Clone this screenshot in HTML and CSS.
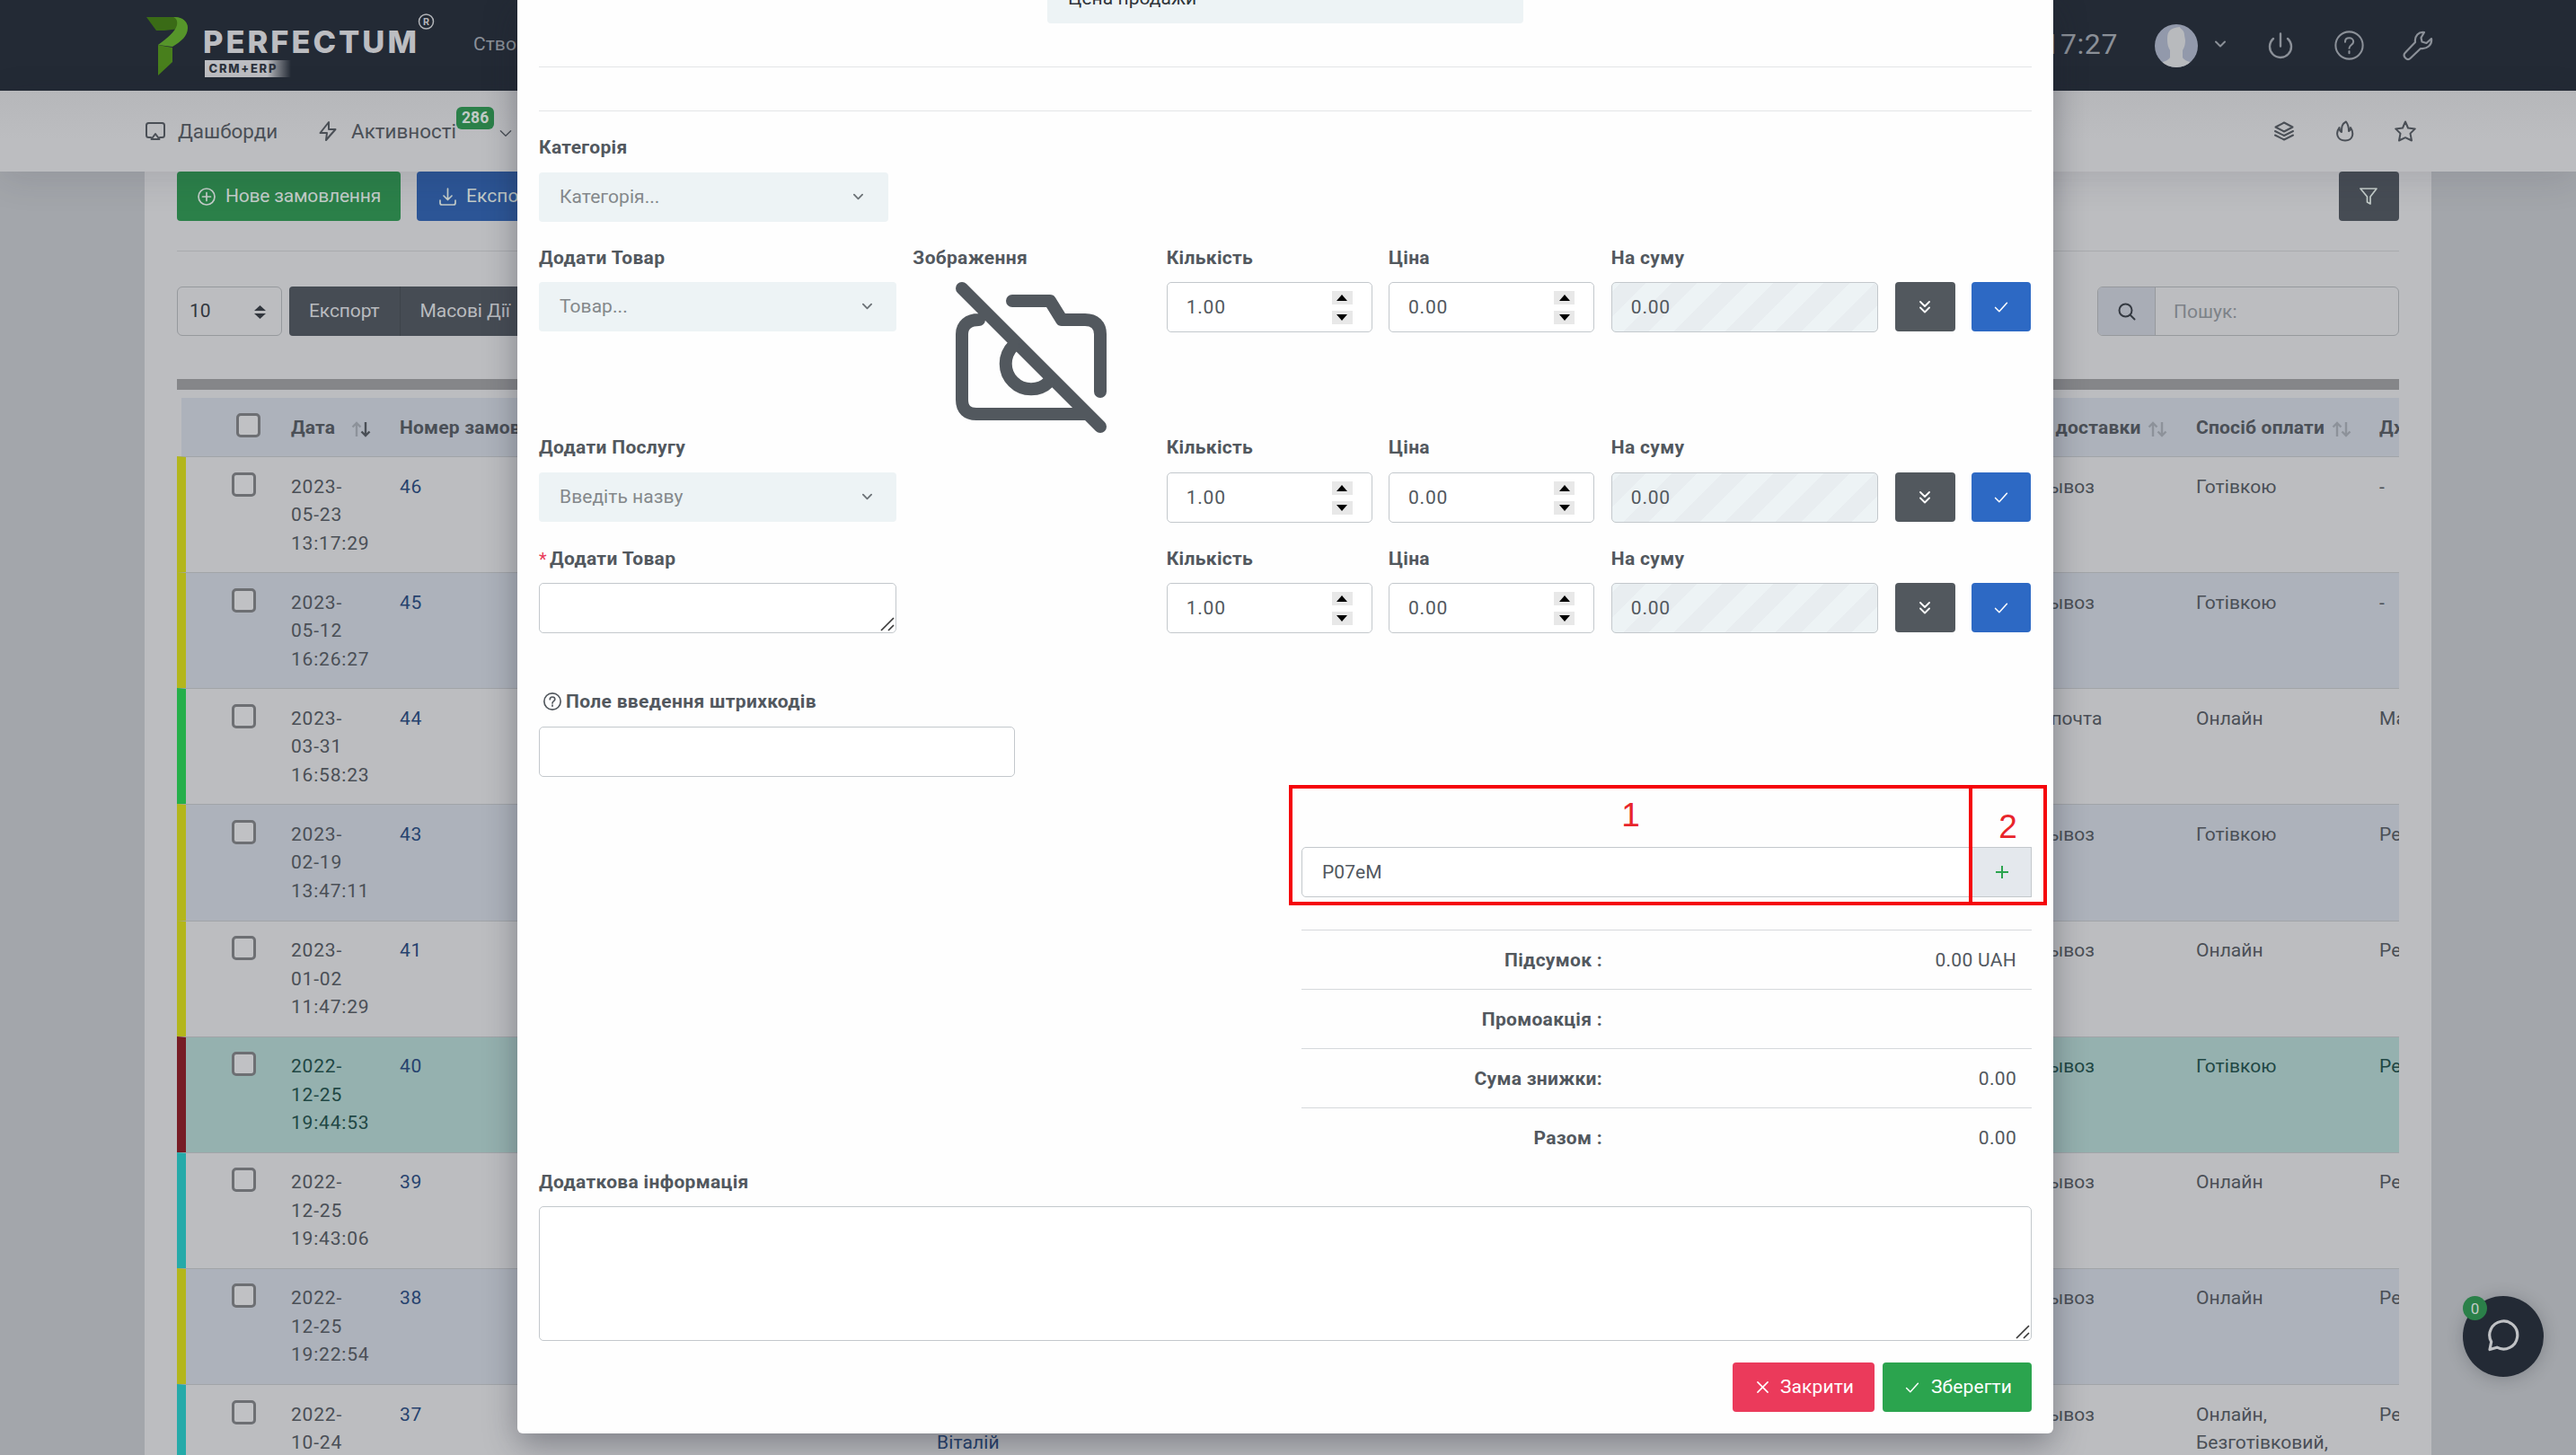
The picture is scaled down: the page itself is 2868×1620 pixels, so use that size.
FILE: index.html
```html
<!DOCTYPE html>
<html lang="uk">
<head>
<meta charset="utf-8">
<title>Perfectum CRM+ERP</title>
<link rel="stylesheet" href="styles.css">
</head>
<body>
<svg class="sprite" aria-hidden="true">
  <symbol id="i-down" viewBox="0 0 12 8"><path d="M1 1.500 6 6.500 11 1.500"/></symbol>
  <symbol id="i-check" viewBox="0 0 18 14"><path d="M1.500 7.500 6.500 12.500 16.500 1.500"/></symbol>
  <symbol id="i-double" viewBox="0 0 12 14"><path d="M1 1 6 6 11 1M1 7.500 6 12.500 11 7.500"/></symbol>
  <symbol id="i-sort" viewBox="0 0 22 18"><path class="up" d="M6 17V2M1.500 6.500 6 2 10.500 6.500"/><path class="dn" d="M16 1V16M11.500 11.500 16 16 20.500 11.500"/></symbol>
  <symbol id="i-help" viewBox="0 0 24 24"><circle cx="12" cy="12" r="11"/><path d="M8.700 9.200C8.700 7.200 10.100 6 12 6s3.400 1.300 3.400 3.100c0 2.500-3.400 2.600-3.400 5.200M12 16.800v1.600"/></symbol>
  <symbol id="i-grip" viewBox="0 0 16 16"><path d="M1 15 15 1M9 15 15 9"/></symbol>
</svg>

<div class="page">
  <header class="topbar">
    <svg class="logo" width="330" height="90" viewBox="0 0 330 90">
      <defs>
        <linearGradient id="fade"><stop offset="0" stop-color="#bcbdc1"/><stop offset=".72" stop-color="#bcbdc1"/><stop offset="1" stop-color="#bcbdc1" stop-opacity="0"/></linearGradient>
      </defs>
      <path fill="#3a6b16" d="M0 19h32c8 0 14 5 14 12L20 34H11z"/>
      <path fill="#56952a" d="M32 19c8 0 14 5 14 12 0 9-7 15-17 21L13 50c10-7 19-15 21-22 1-5-1-8-4-9z"/>
      <path fill="#487f1c" d="M13 50l16 3v16L13 84z"/>
      <text class="logo-name" x="63" y="59" textLength="238">PERFECTUM</text>
      <rect x="65" y="67" width="96" height="19" fill="url(#fade)"/>
      <text class="logo-tag" x="69.500" y="80.500" textLength="75">CRM+ERP</text>
      <circle cx="311.500" cy="24" r="8" fill="none" stroke="#b4b6ba" stroke-width="1.500"/>
      <text class="logo-reg" x="311.500" y="28" text-anchor="middle">R</text>
    </svg>
    <span class="create">Створити</span>
    <div class="tools">
      <span class="clock">17:27</span>
      <svg class="avatar" width="48" height="48" viewBox="0 0 48 48"><clipPath id="round"><circle cx="24" cy="24" r="24"/></clipPath><g clip-path="url(#round)"><path fill="#9299ab" d="M0 0h48v48H0z"/><path fill="#b8babd" d="M14 16C14 7 18 4 28 3c0 2 5 3 5 9l1 6c0 4-1 8-3 11v8c2 4 8 4 11 7v6H6v-6c3-3 9-3 11-7v-8c-2-3-3-7-3-11z"/></g></svg>
      <svg class="ico tool-chev" width="12" height="8"><use href="#i-down"/></svg>
      <svg class="ico tool-power" width="28" height="30" viewBox="0 0 28 30"><path d="M14 1.500v14M6 7a12 12 0 1 0 16 0"/></svg>
      <svg class="ico tool-help" width="33" height="33"><use href="#i-help"/></svg>
      <svg class="ico tool-wrench" width="34" height="34" viewBox="0 0 34 34"><path d="M24 2c-6-1-11 4-10 11L3 24.500c-2 2-2 4 0 6s4 2 6 0L20 20c7 1 13-4 12-11l-5.500 5-5-1.500-1-4.500z"/></svg>
    </div>
  </header>

  <nav class="navbar">
    <svg class="ico" width="24" height="22" viewBox="0 0 24 22"><path d="M7 18H4.500A2.500 2.500 0 0 1 2 15.500v-11A2.500 2.500 0 0 1 4.500 2h15A2.500 2.500 0 0 1 22 4.500v11a2.500 2.500 0 0 1-2.500 2.500H17M12 14l4.500 6h-9z"/></svg>
    <span class="nav-a">Дашборди</span>
    <svg class="ico" width="20" height="24" viewBox="0 0 20 24"><path d="M11 2 1.500 14H9l-1 8 10.500-12H11z"/></svg>
    <span class="nav-b">Активності<b class="badge">286</b></span>
    <svg class="ico nav-chev" width="14" height="9"><use href="#i-down"/></svg>
    <div class="nav-icons">
      <svg class="ico" width="24" height="24" viewBox="0 0 24 24"><path d="M12 2.500 21.500 7.500 12 12.500 2.500 7.500zM2 12l10 5 10-5M2 16.500l10 5 10-5"/></svg>
      <svg class="ico" width="22" height="24" viewBox="0 0 22 24"><path d="M12 1.500C7 4 7 8 7 13 5 12 4.500 10 4.500 8 0 14 2 22.500 11 22.500S21 14 17 8c0 2-.5 3.500-2 4 0-4-1-8-3-10.500z"/></svg>
      <svg class="ico" width="24" height="24" viewBox="0 0 24 24"><path d="M12 1.500 15 8.500 22.800 9.400 17.500 14.600 19 22.500 12 19.200 5 22.500 6.500 14.600 1.200 9.400 9 8.500z"/></svg>
    </div>
  </nav>

  <main class="sheet">
    <div class="actions">
      <button class="btn green"><svg class="ico" width="20" height="20" viewBox="0 0 20 20"><circle cx="10" cy="10" r="9"/><path d="M10 5.500v9M5.500 10h9"/></svg>Нове замовлення</button>
      <button class="btn blue"><svg class="ico" width="19" height="20" viewBox="0 0 19 20"><path d="M9.500 1v12M5 9l4.500 4.500L14 9M1 14v3a2 2 0 0 0 2 2h13a2 2 0 0 0 2-2v-3"/></svg>Експорт</button>
      <button class="btn slate filter"><svg class="ico" width="20" height="19" viewBox="0 0 20 19"><path d="M1 1h18l-7 9v8l-3.500-2v-6z"/></svg></button>
    </div>
    <div class="controls">
      <div class="pagesize">10<svg width="13" height="15" viewBox="0 0 13 15"><path d="M6.500 0 13 6H0zM0 9h13L6.500 15z"/></svg></div>
      <div class="group"><span>Експорт</span><span>Масові Дії</span></div>
      <div class="search"><span class="search-ico"><svg class="ico" width="20" height="20" viewBox="0 0 20 20"><circle cx="8.500" cy="8.500" r="7"/><path d="M13.500 13.500 18.500 18.500"/></svg></span><span class="search-text">Пошук:</span></div>
    </div>
    <div class="scroll"></div>
    <div class="orders">
      <div class="row head"><span class="cell-check"><i class="box"></i></span><span>Дата <svg class="sort active" width="22" height="18"><use href="#i-sort"/></svg></span><span>Номер замовлення</span><span></span><span></span><span>Спосіб доставки <svg class="sort" width="22" height="18"><use href="#i-sort"/></svg></span><span>Спосіб оплати <svg class="sort" width="22" height="18"><use href="#i-sort"/></svg></span><span>Джерело</span></div>
      <div class="row yellow"><span class="cell-check"><i class="box"></i></span><span class="date">2023-<br>05-23<br>13:17:29</span><a>46</a><span></span><span></span><span>Самовывоз</span><span>Готівкою</span><span>-</span></div>
      <div class="row yellow alt"><span class="cell-check"><i class="box"></i></span><span class="date">2023-<br>05-12<br>16:26:27</span><a>45</a><span></span><span></span><span>Самовывоз</span><span>Готівкою</span><span>-</span></div>
      <div class="row lime"><span class="cell-check"><i class="box"></i></span><span class="date">2023-<br>03-31<br>16:58:23</span><a>44</a><span></span><span></span><span>Новая почта</span><span>Онлайн</span><span>Магазин</span></div>
      <div class="row yellow alt"><span class="cell-check"><i class="box"></i></span><span class="date">2023-<br>02-19<br>13:47:11</span><a>43</a><span></span><span></span><span>Самовывоз</span><span>Готівкою</span><span>Реклама</span></div>
      <div class="row yellow"><span class="cell-check"><i class="box"></i></span><span class="date">2023-<br>01-02<br>11:47:29</span><a>41</a><span></span><span></span><span>Самовывоз</span><span>Онлайн</span><span>Реклама</span></div>
      <div class="row maroon done"><span class="cell-check"><i class="box"></i></span><span class="date">2022-<br>12-25<br>19:44:53</span><a>40</a><span></span><span></span><span>Самовывоз</span><span>Готівкою</span><span>Реклама</span></div>
      <div class="row cyan"><span class="cell-check"><i class="box"></i></span><span class="date">2022-<br>12-25<br>19:43:06</span><a>39</a><span></span><span></span><span>Самовывоз</span><span>Онлайн</span><span>Реклама</span></div>
      <div class="row yellow alt"><span class="cell-check"><i class="box"></i></span><span class="date">2022-<br>12-25<br>19:22:54</span><a>38</a><span></span><span></span><span>Самовывоз</span><span>Онлайн</span><span>Реклама</span></div>
      <div class="row cyan"><span class="cell-check"><i class="box"></i></span><span class="date">2022-<br>10-24</span><a>37</a><a class="client">Віталій</a><span></span><span>Самовывоз</span><span>Онлайн,<br>Безготівковий,</span><span>Реклама</span></div>
    </div>
  </main>
</div>

<button class="chat"><b>0</b><svg width="37" height="37" viewBox="0 0 37 37"><path d="M3 34.500 4.700 26A15.500 15.500 0 1 1 11 32.200z"/></svg></button>

<div class="modal">
  <div class="select price">Цена продажи<svg class="ico" width="12" height="8"><use href="#i-down"/></svg></div>
  <hr class="line-a"><hr class="line-b">

  <div class="field category">
    <label>Категорія</label>
    <div class="select">Категорія...<svg class="ico" width="12" height="8"><use href="#i-down"/></svg></div>
  </div>

  <div class="item first">
    <div><label>Додати Товар</label><div class="select">Товар...<svg class="ico" width="12" height="8"><use href="#i-down"/></svg></div></div>
    <div><label>Зображення</label><svg class="camera" width="168" height="168" viewBox="0 0 168 168"><path d="M7 7l154 154M26 42C14 42 7 48 7 58v73c0 11 6 16 16 16h122M63 21h42l13 21h26c11 0 17 6 17 16v64"/><path d="M64 71a28 28 0 1 0 40 40"/></svg></div>
    <div><label>Кількість</label><div class="input num">1.00<span class="step"><i></i><i></i></span></div></div>
    <div><label>Ціна</label><div class="input num">0.00<span class="step"><i></i><i></i></span></div></div>
    <div><label>На суму</label><div class="input num off">0.00</div></div>
    <button class="sq slate2"><svg class="ico" width="12" height="14"><use href="#i-double"/></svg></button>
    <button class="sq blue2"><svg class="ico" width="16" height="12"><use href="#i-check"/></svg></button>
  </div>

  <div class="item second">
    <div><label>Додати Послугу</label><div class="select">Введіть назву<svg class="ico" width="12" height="8"><use href="#i-down"/></svg></div></div>
    <div></div>
    <div><label>Кількість</label><div class="input num">1.00<span class="step"><i></i><i></i></span></div></div>
    <div><label>Ціна</label><div class="input num">0.00<span class="step"><i></i><i></i></span></div></div>
    <div><label>На суму</label><div class="input num off">0.00</div></div>
    <button class="sq slate2"><svg class="ico" width="12" height="14"><use href="#i-double"/></svg></button>
    <button class="sq blue2"><svg class="ico" width="16" height="12"><use href="#i-check"/></svg></button>
  </div>

  <div class="item third">
    <div><label><em>*</em>Додати Товар</label><div class="input area"><svg class="grip" width="16" height="16"><use href="#i-grip"/></svg></div></div>
    <div></div>
    <div><label>Кількість</label><div class="input num">1.00<span class="step"><i></i><i></i></span></div></div>
    <div><label>Ціна</label><div class="input num">0.00<span class="step"><i></i><i></i></span></div></div>
    <div><label>На суму</label><div class="input num off">0.00</div></div>
    <button class="sq slate2"><svg class="ico" width="12" height="14"><use href="#i-double"/></svg></button>
    <button class="sq blue2"><svg class="ico" width="16" height="12"><use href="#i-check"/></svg></button>
  </div>

  <div class="field barcode">
    <label><svg class="ico" width="20" height="20"><use href="#i-help"/></svg>Поле введення штрихкодів</label>
    <div class="input"></div>
  </div>

  <div class="totals">
    <div class="promo"><div class="input">P07eM</div><span class="plus"><svg class="ico" width="14" height="14" viewBox="0 0 14 14"><path d="M7 0v14M0 7h14"/></svg></span></div>
    <dl>
      <div><dt>Підсумок :</dt><dd>0.00 UAH</dd></div>
      <div><dt>Промоакція :</dt><dd></dd></div>
      <div><dt>Сума знижки:</dt><dd>0.00</dd></div>
      <div><dt>Разом :</dt><dd>0.00</dd></div>
    </dl>
  </div>

  <div class="field notes">
    <label>Додаткова інформація</label>
    <div class="input area"><svg class="grip" width="16" height="16"><use href="#i-grip"/></svg></div>
  </div>

  <div class="footer">
    <button class="btn close"><svg class="ico" width="13" height="13" viewBox="0 0 14 14"><path d="M1 1l12 12M13 1 1 13"/></svg>Закрити</button>
    <button class="btn save"><svg class="ico" width="16" height="12" viewBox="0 0 18 14"><path d="M1.500 7.500 6.500 12.500 16.500 1.500"/></svg>Зберегти</button>
  </div>

  <div class="mark one">1</div>
  <div class="mark two">2</div>
</div>
</body>
</html>
```

FILE: styles.css
```css
* { box-sizing: border-box; }
html, body { margin: 0; height: 1620px; overflow: hidden; }
body {
  position: relative;
  width: 2868px;
  background: #a3a6ab;
  font: 21px/31.5px Roboto, "Noto Sans", sans-serif;
  letter-spacing: .05px;
  color: #4a4f56;
}
button { font: inherit; letter-spacing: inherit; border: 0; color: inherit; }
.sprite { position: absolute; width: 0; height: 0; }
.ico { fill: none; stroke: currentColor; stroke-width: 2; stroke-linecap: round; stroke-linejoin: round; flex: none; }

.page { height: 1620px; overflow: hidden; }

/* top bar */
.topbar { display: flex; height: 101px; padding: 0 159px 0 161px; background: #232a35; color: #8b9098; }
.logo { flex: none; margin-left: 2px; }
.logo-name { font: 800 34.500px Inter, sans-serif; fill: #bcbdc1; }
.logo-tag { font: 800 13px Inter, sans-serif; fill: #2c323c; }
.logo-reg { font: 700 11px Roboto, sans-serif; fill: #b4b6ba; }
.create { margin: 34px 0 0 34px; }
.tools { display: flex; align-items: center; margin-left: auto; }
.clock { font-size: 32px; letter-spacing: .6px; margin: -1px 41px 0 0; color: #8b9098; }
.tool-chev { margin: -4px 47px 0 19px; }
.tool-power { margin-right: 46px; stroke-width: 2.4; }
.tool-help { margin-right: 43px; stroke-width: 1.500; }
.tool-wrench { stroke-width: 2.2; }

/* navigation */
.navbar {
  position: relative;
  display: flex;
  align-items: center;
  height: 90px;
  padding: 0 178px 0 161px;
  background: linear-gradient(#b6b7ba, #bcbdc0 60%);
  font-size: 22.400px;
  letter-spacing: 0;
  box-shadow: 0 8px 40px rgba(30, 35, 50, .12);
}
.nav-a { margin: 1px 46px 0 13px; }
.nav-b { position: relative; margin: 1px 48px 0 16px; }
.badge {
  position: absolute;
  left: 117px;
  top: -12px;
  width: 42px;
  height: 25px;
  border-radius: 6px;
  background: #2b8049;
  color: #c2cbc7;
  font-size: 17.500px;
  line-height: 25px;
  text-align: center;
}
.nav-chev { margin-top: 4px; stroke-width: 1.200; }
.nav-icons { display: flex; gap: 44.500px; margin-left: auto; }

/* order list */
.sheet { width: 2546px; height: 1429px; margin-left: 161px; padding: 0 36px; background: #bcbdc0; }
.actions { display: flex; gap: 18px; height: 89px; border-bottom: 1px solid #a9abae; }
.btn {
  display: flex;
  align-items: center;
  gap: 11px;
  height: 55px;
  padding: 0 23px;
  border-radius: 4px;
  color: #c3ccc9;
  white-space: nowrap;
}
.btn .ico { stroke-width: 1.700; }
.green { background: #2b8049; letter-spacing: -.2px; width: 249px; }
.blue { background: #2c5596; width: 170px; padding-left: 25px; }
.slate { background: #464c54; }
.filter { width: 67px; margin-left: auto; }
.controls { display: flex; height: 55px; margin-top: 39px; }
.pagesize {
  display: flex;
  align-items: center;
  justify-content: space-between;
  width: 117px;
  padding: 1px 17px 0 13px;
  border: 1px solid #96999d;
  border-radius: 6px;
  color: #32373e;
}
.pagesize svg { fill: #32373e; }
.group { display: flex; margin-left: 8px; border-radius: 4px; background: #464c54; color: #b9bbbf; line-height: 55px; }
.group span { padding: 0 22px; letter-spacing: -.1px; }
.group span + span { border-left: 1px solid #3d434a; }
.search { display: flex; width: 336px; margin-left: auto; border: 1px solid #96999d; border-radius: 6px; line-height: 55px; overflow: hidden; color: #7d8288; }
.search-ico { display: flex; align-items: center; justify-content: center; width: 64px; border-right: 1px solid #96999d; background: #a9adb6; color: #353a42; }
.search-text { padding-left: 20px; }
.scroll { height: 12px; margin: 48px 0 9px; background: #858689; }

.orders { overflow: hidden; }
.row {
  position: relative;
  display: grid;
  grid-template-columns: 117px 121px 598px 1000px 173px 229px 204px 200px;
  height: 129.130px;
  padding-top: 17.500px;
  border-top: 1px solid #a1a4a8;
  border-left: 10px solid;
  white-space: nowrap;
}
.row > * { color: #4a4f56; }
.row > a { color: #26426e; letter-spacing: .7px; }
.row .date { letter-spacing: .8px; }
.head {
  height: 65px;
  margin-left: 5px;
  padding-top: 18px;
  border: 0;
  background: #adb2bb;
  font-weight: 700;
  letter-spacing: .2px;
  grid-template-columns: 122px 121px 598px 1000px 173px 229px 204px 200px;
}
.head .cell-check { padding: 0 0 0 61px; }
.cell-check { padding-left: 51px; }
.box { display: block; width: 27px; height: 27px; margin-top: -1px; border: 3px solid #6d6f73; border-radius: 5px; background: #c0c1c4; }
.sort { fill: none; stroke: #8d929a; stroke-width: 2.400; margin-left: 2px; vertical-align: -4px; }
.sort.active { --on: #4a4f56; margin-left: 12px; }
.dn { stroke: var(--on, #8d929a); }
.alt { background: #adb2bb; }
.done { background: #95b1af; }
.done > *:not(a) { color: #1f4744; }
.yellow { border-left-color: #b3b61c; }
.lime { border-left-color: #25af4a; }
.maroon { border-left-color: #771c25; }
.cyan { border-left-color: #25aaa9; }
.client { padding-top: 31.500px; }
.row .client { letter-spacing: .1px; }

/* chat launcher */
.chat {
  position: absolute;
  left: 2742px;
  top: 1443px;
  width: 90px;
  height: 90px;
  padding: 7px 0 0;
  border-radius: 50%;
  background: #232a35;
  box-shadow: 0 2px 18px rgba(30, 35, 45, .25);
}
.chat svg { fill: none; stroke: #bfc1c4; stroke-width: 3.200; stroke-linejoin: round; }
.chat b { position: absolute; left: 0; top: 0; width: 27px; height: 27px; border-radius: 50%; background: #2b8049; color: #c2cbc7; font-size: 17px; font-weight: 400; line-height: 28px; }

/* order dialog */
.modal {
  position: absolute;
  left: 576px;
  top: 0;
  width: 1710px;
  height: 1596px;
  padding: 0 24px;
  border-radius: 0 0 6px 6px;
  background: #fefefe;
  color: #52585e;
  box-shadow: 0 12px 36px rgba(28, 32, 44, .38);
  clip-path: inset(0 -60px -60px -60px);
}
.modal hr { height: 1px; margin: 0; border: 0; background: #e3e5e7; }
.modal .line-a { margin-top: 48px; }
.modal .line-b { margin: 48px 0 24px; }
label { display: flex; align-items: center; height: 32px; padding-top: 2px; font-weight: 700; letter-spacing: .33px; white-space: nowrap; }
label em { margin-right: 3px; color: #e93b5a; font: 400 20px Roboto, sans-serif; }
.select {
  display: flex;
  align-items: center;
  justify-content: space-between;
  height: 55px;
  margin-top: 11px;
  padding: 1px 27px 0 23px;
  border-radius: 4px;
  background: #edf3f5;
  color: #84888b;
}
.select .ico { width: 11px; margin-top: -3px; color: #6c7277; }
.modal .price { width: 530px; margin: -29px 0 0 566px; color: #2f343a; }
.modal .price .ico { margin-top: -6px; }
.category .select { width: 389px; margin-top: 12px; padding-right: 28px; }
.input {
  position: relative;
  display: flex;
  align-items: center;
  height: 56px;
  margin-top: 11px;
  padding: 1px 21px 0;
  border: 1px solid #c3c8cc;
  border-radius: 5px;
  background: #fff;
}
.num { letter-spacing: .8px; justify-content: space-between; }
.off { background: repeating-linear-gradient(-45deg, #edf3f5 0 20px, #e8edf0 20px 40px); }
.step { display: flex; flex-direction: column; gap: 7px; }
.step i { display: flex; align-items: center; justify-content: center; width: 23px; height: 15px; background: #e8e8e8; }
.step i::before { content: ""; border: 6.500px solid transparent; border-top: 0; border-bottom: 7px solid #000; }
.step i + i::before { border-top: 7px solid #000; border-bottom: 0; }
.item { display: grid; grid-template-columns: 398px 264px 229px 229.500px 297.500px 67px 66px; column-gap: 18.330px; }
.first { height: 211px; margin-top: 24px; }
.camera { display: block; margin: 11px 0 0 48px; fill: none; stroke: #52585e; stroke-width: 14; stroke-linecap: round; stroke-linejoin: round; }
.second { height: 124px; }
.second .select, .second .input { margin-top: 12px; }
.sq { display: flex; align-items: center; justify-content: center; height: 55px; margin-top: 43px; padding: 0; border-radius: 4px; color: #fff; }
.sq .ico { stroke-width: 1.800; }
.second .sq { margin-top: 44px; }
.slate2 { background: #52585e; }
.blue2 { background: #2d69c4; }
.third { height: 159px; }
.grip { position: absolute; right: 1px; bottom: 1px; fill: none; stroke: #3a3a3a; stroke-width: 1.700; }
.barcode .ico { margin: -2px 5px 0 5px; stroke-width: 2; }
.barcode .input { width: 530px; margin-top: 12px; }
.totals { width: 813px; margin: 78px 0 0 auto; }
.promo { display: flex; }
.promo .input { flex: 1; margin: 0; padding-left: 22px; border-radius: 5px 0 0 5px; }
.plus { display: flex; align-items: center; justify-content: center; width: 66px; border: 1px solid #c3c8cc; border-left: 0; background: #e4e8ed; color: #2ba44e; }
dl { margin: 36px 0 0; }
dl > div { display: flex; height: 66px; padding: 18px 17px 0 0; border-top: 1px solid #d6d9dc; }
dt { width: 335px; text-align: right; font-weight: 700; letter-spacing: .3px; }
dd { flex: 1; margin: 0; text-align: right; letter-spacing: .3px; }
.notes { margin-top: 1px; }
.notes .input { height: 150px; }
.footer { display: flex; justify-content: flex-end; gap: 9px; margin-top: 24px; }
.footer .btn { color: #fff; gap: 13px; padding: 0 23px 0 26px; letter-spacing: .1px; }
.footer .close { width: 158px; padding-left: 27px; background: #eb3a5b; }
.footer .save { width: 166px; padding-left: 25px; background: #2ba44e; }

/* numbered callouts */
.mark {
  position: absolute;
  top: 874px;
  height: 134px;
  border: 4px solid #f5050b;
  color: #e8252b;
  font: 37px/36px "Liberation Sans", Arial, sans-serif;
  letter-spacing: 0;
  text-align: center;
}
.one { left: 859px; width: 761px; padding-top: 12px; }
.two { left: 1616px; width: 87px; padding-top: 25px; }
```
